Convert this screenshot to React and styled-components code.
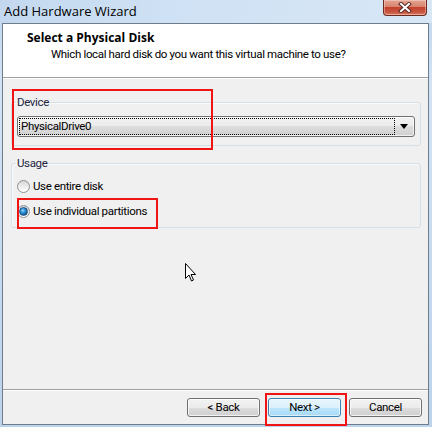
import React from "react";
import styled, { createGlobalStyle } from "styled-components";

const Global = createGlobalStyle`
  html, body { margin: 0; padding: 0; background: #fff; }
  body { font-family: Roboto, "Open Sans", "Liberation Sans", sans-serif; font-size: 11.5px; letter-spacing: -0.35px; color: #000; }
  * { box-sizing: border-box; }
`;

const Window = styled.div`
  position: relative;
  width: 432px;
  height: 427px;
  display: flex;
  flex-direction: column;
  background: linear-gradient(180deg, #c0d6ee 0%, #d2e3f4 20%, #c6daef 60%, #bcd3ec 100%);
  overflow: hidden;
`;

const TitleBar = styled.div`
  height: 23px;
  flex: none;
  display: flex;
  justify-content: space-between;
  align-items: flex-start;
  background: linear-gradient(90deg, #c3d8ef 0%, #cfe1f4 40%, #d8e7f6 100%);
`;

const Title = styled.div`
  padding: 3px 0 0 4px;
  font-family: "Open Sans", sans-serif;
  font-size: 13px;
  letter-spacing: 0;
  line-height: 16px;
  color: #000;
`;

const CloseButton = styled.div`
  width: 44px;
  height: 16px;
  margin-right: 5px;
  border: 1px solid #6f2a20;
  border-top: none;
  border-radius: 0 0 4px 4px;
  background: linear-gradient(180deg, #e3a695 0%, #d7826d 45%, #c4412e 50%, #c95a43 85%, #d98c70 100%);
  box-shadow: inset 0 0 0 1px rgba(255, 220, 210, 0.45);
  display: flex;
  align-items: center;
  justify-content: center;
`;

const Client = styled.div`
  flex: 1;
  margin: 0 3px 2px 2px;
  border: 1px solid #6f7c8b;
  background: #f0f0f0;
  display: flex;
  flex-direction: column;
`;

const Header = styled.div`
  height: 53px;
  flex: none;
  background: #fff;
  padding: 6px 0 0 24px;
`;

const HeaderTitle = styled.div`
  font-family: "Open Sans", sans-serif;
  font-size: 12px;
  letter-spacing: 0;
  font-weight: 700;
  line-height: 16px;
`;

const HeaderSubtitle = styled.div`
  line-height: 16px;
  margin-left: 24px;
`;

const Separator = styled.div`
  height: 2px;
  flex: none;
  border-top: 1px solid #a0a0a0;
  border-bottom: 1px solid #ffffff;
`;

const Body = styled.div`
  flex: 1;
  padding: 15px 7px 0 8px;
  display: flex;
  flex-direction: column;
`;

const Group = styled.fieldset`
  margin: ${(p) => (p.$first ? "0" : "9px 0 0")};
  padding: 0 5px 8px;
  min-width: 0;
  border: 1px solid #d5dfe5;
  border-radius: 3px;
  box-shadow: inset 1px 1px 0 #fafafa;
`;

const Legend = styled.legend`
  padding: 0 1px;
  margin-left: -1px;
  line-height: 16px;
  color: #1c2440;
`;

const Combo = styled.div`
  margin-top: 6px;
  height: 21px;
  border: 1px solid #707070;
  border-radius: 3px;
  background: linear-gradient(180deg, #f2f2f2 0%, #ebebeb 50%, #dddddd 50%, #cfcfcf 100%);
  box-shadow: inset 0 0 0 1px rgba(255, 255, 255, 0.7);
  display: flex;
  align-items: stretch;
  padding: 1px;
`;

const ComboText = styled.div`
  flex: 1;
  border: 1px dotted #000;
  padding-left: 1px;
  line-height: 15px;
  white-space: nowrap;
`;

const ComboArrow = styled.div`
  width: 18px;
  flex: none;
  display: flex;
  align-items: center;
  justify-content: center;
`;

const RadioRow = styled.label`
  display: flex;
  align-items: center;
  gap: 3px;
  height: 16px;
  margin-top: ${(p) => p.$mt}px;
`;

const RadioCircle = styled.span`
  width: 13px;
  height: 13px;
  flex: none;
  border-radius: 50%;
  border: 1px solid #8c8f94;
  background: linear-gradient(180deg, #d6d6d6 0%, #f1f1f1 60%, #ffffff 100%);
  display: flex;
  align-items: center;
  justify-content: center;
  &::after {
    content: "";
    width: 7px;
    height: 7px;
    border-radius: 50%;
    display: ${(p) => (p.$checked ? "block" : "none")};
    background: radial-gradient(circle at 40% 35%, #8fd3ff 0%, #2a8ad4 40%, #0c3d6e 100%);
    border: 1px solid #1b4f80;
  }
`;

const Footer = styled.div`
  height: 33px;
  flex: none;
  display: flex;
  justify-content: flex-end;
  gap: 8px;
  padding: 7px 6px 7px 0;
`;

const Button = styled.div`
  width: 73px;
  height: 19px;
  border: 1px solid ${(p) => (p.$default ? "#3c7fb1" : "#707070")};
  border-radius: 3px;
  background: ${(p) =>
    p.$default
      ? "linear-gradient(180deg, #eaf6fd 0%, #d9f0fc 50%, #bee6fd 50%, #a7d9f5 100%)"
      : "linear-gradient(180deg, #f2f2f2 0%, #ebebeb 50%, #dddddd 50%, #cfcfcf 100%)"};
  box-shadow: inset 0 0 0 1px ${(p) => (p.$default ? "rgba(255,255,255,0.6)" : "rgba(255,255,255,0.75)")};
  display: flex;
  align-items: center;
  justify-content: center;
  line-height: 15px;
`;

const Highlight = styled.div`
  position: absolute;
  left: ${(p) => p.$x}px;
  top: ${(p) => p.$y}px;
  width: ${(p) => p.$w}px;
  height: ${(p) => p.$h}px;
  border: 2px solid #f01414;
  pointer-events: none;
`;

const Cursor = styled.svg`
  position: absolute;
  left: 184px;
  top: 262px;
  pointer-events: none;
`;

export default function App() {
  return (
    <>
      <Global />
      <Window>
        <TitleBar>
          <Title>Add Hardware Wizard</Title>
          <CloseButton>
            <svg width="14" height="11" viewBox="0 0 14 11">
              <path d="M3 2 L11 9 M11 2 L3 9" stroke="#5a2a24" strokeWidth="4" strokeLinecap="square" />
              <path d="M3 2 L11 9 M11 2 L3 9" stroke="#ffffff" strokeWidth="2" strokeLinecap="square" />
            </svg>
          </CloseButton>
        </TitleBar>
        <Client>
          <Header>
            <HeaderTitle>Select a Physical Disk</HeaderTitle>
            <HeaderSubtitle>Which local hard disk do you want this virtual machine to use?</HeaderSubtitle>
          </Header>
          <Separator />
          <Body>
            <Group $first>
              <Legend>Device</Legend>
              <Combo>
                <ComboText>PhysicalDrive0</ComboText>
                <ComboArrow>
                  <svg width="8" height="5" viewBox="0 0 8 5">
                    <path d="M0 0 H8 L4 5 Z" fill="#000" />
                  </svg>
                </ComboArrow>
              </Combo>
            </Group>
            <Group>
              <Legend>Usage</Legend>
              <RadioRow $mt={7}>
                <RadioCircle />
                <span>Use entire disk</span>
              </RadioRow>
              <RadioRow $mt={9}>
                <RadioCircle $checked />
                <span>Use individual partitions</span>
              </RadioRow>
            </Group>
          </Body>
          <Separator />
          <Footer>
            <Button>&lt; Back</Button>
            <Button $default>Next &gt;</Button>
            <Button>Cancel</Button>
          </Footer>
        </Client>
        <Highlight $x={12} $y={89} $w={201} $h={61} />
        <Highlight $x={17} $y={198} $w={141} $h={31} />
        <Highlight $x={265} $y={393} $w={82} $h={33} />
        <Cursor width="13" height="21" viewBox="0 0 13 21">
          <path
            d="M1.5 1.5 L1.5 16.5 L5 13 L7.5 19 L9.5 18 L7 12.5 L11.5 12.5 Z"
            fill="#fff"
            stroke="#000"
            strokeWidth="1"
            strokeLinejoin="miter"
          />
        </Cursor>
      </Window>
    </>
  );
}
